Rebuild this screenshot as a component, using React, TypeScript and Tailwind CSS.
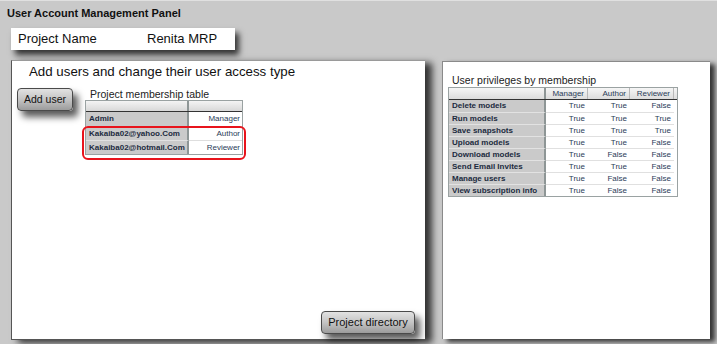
import React from 'react';

const members = [
  { email: 'Admin', role: 'Manager' },
  { email: 'Kakaiba02@yahoo.Com', role: 'Author' },
  { email: 'Kakaiba02@hotmail.Com', role: 'Reviewer' },
];

const privileges: [string, string, string, string][] = [
  ['Delete models', 'True', 'True', 'False'],
  ['Run models', 'True', 'True', 'True'],
  ['Save snapshots', 'True', 'True', 'True'],
  ['Upload models', 'True', 'True', 'False'],
  ['Download models', 'True', 'False', 'False'],
  ['Send Email Invites', 'True', 'True', 'False'],
  ['Manage users', 'True', 'False', 'False'],
  ['View subscription info', 'True', 'False', 'False'],
];

function GrayButton({ label, className = '' }: { label: string; className?: string }) {
  return (
    <button
      className={`h-[23px] rounded-[4px] border border-[#4a4a4a] bg-gradient-to-b from-[#e2e2e2] via-[#c4c4c4] to-[#9c9c9c] text-[#111] shadow-[5px_6px_7px_rgba(0,0,0,0.65)] ${className}`}
    >
      {label}
    </button>
  );
}

function MembershipTable() {
  return (
    <div className="relative">
      <div className="pl-[5px] text-[10.5px] leading-[12px] text-[#222]">Project membership table</div>
      <div className="w-[158px] border border-[#9aa2a2] bg-white">
        <div className="flex h-[11px] border-b-[1.5px] border-[#333] bg-gradient-to-b from-[#f4f4f4] to-[#d8d8d8]">
          <div className="w-[103px] border-r-2 border-[#8e9696]" />
          <div className="flex-1" />
        </div>
        {members.map((m, i) => (
          <div key={m.email} className="flex h-[14px] text-[8px] leading-[14px]">
            <div
              className={`w-[103px] border-r-2 border-[#8e9696] bg-[#cacaca] pl-[3px] font-bold text-[#1c2a40] ${
                i > 0 ? 'border-t border-t-[#e2e2e2]' : ''
              }`}
            >
              {m.email}
            </div>
            <div className={`flex-1 pr-[2px] text-right text-[#2a3c58] ${i > 0 ? 'border-t border-t-[#dedede]' : ''}`}>
              {m.role}
            </div>
          </div>
        ))}
      </div>
      <div className="pointer-events-none absolute left-[-3px] top-[38px] h-[34px] w-[164px] rounded-[6px] border-2 border-[#e8141c]" />
    </div>
  );
}

function PrivilegesTable() {
  const cols = ['Manager', 'Author', 'Reviewer'];
  const widths = ['w-[42px]', 'w-[42px]', 'w-[44px]'];
  return (
    <div className="w-[230px] border border-[#9aa2a2] bg-white">
      <div className="flex h-[12px] border-b-[1.5px] border-[#333] bg-gradient-to-b from-[#f6f6f6] to-[#dcdcdc] text-[8px] leading-[12px] text-[#2a3c58]">
        <div className="w-[97px] border-r-2 border-[#8e9696]" />
        {cols.map((c, i) => (
          <div key={c} className={`${widths[i]} border-r border-[#b8b8b8] pr-[3px] text-right`}>
            {c}
          </div>
        ))}
      </div>
      {privileges.map((row, r) => (
        <div key={row[0]} className="flex h-[12px] text-[8px] leading-[12px]">
          <div
            className={`w-[97px] border-r-2 border-[#8e9696] bg-[#cacaca] pl-[3px] font-bold text-[#1c2a40] ${
              r > 0 ? 'border-t border-t-[#e2e2e2]' : ''
            }`}
          >
            {row[0]}
          </div>
          {row.slice(1).map((v, i) => (
            <div
              key={i}
              className={`${widths[i]} pr-[3px] text-right text-[#2a3c58] ${r > 0 ? 'border-t border-t-[#e0e0e0]' : ''}`}
            >
              {v}
            </div>
          ))}
        </div>
      ))}
    </div>
  );
}

export default function App() {
  return (
    <div className="flex h-[344px] w-[717px] flex-col overflow-hidden border-t border-[#e0e0e0] bg-[#c9c9c9] font-['Liberation_Sans',Arial,sans-serif]">
      <div className="pl-[7px] pt-[6px] text-[11px] font-bold leading-[13px] text-[#111]">User Account Management Panel</div>

      <div className="ml-[11px] mt-[8px] flex h-[22px] w-[224px] items-center bg-white text-[13px] text-[#111] shadow-[4px_5px_6px_rgba(0,0,0,0.75)]">
        <span className="w-[136px] pl-[7px]">Project Name</span>
        <span>Renita MRP</span>
      </div>

      <div className="mt-[10px] flex items-start">
        <div className="ml-[11px] flex h-[280px] w-[414px] flex-col border-b border-l border-t border-[#555] border-t-[#9a9a9a] bg-white shadow-[7px_3px_7px_rgba(0,0,0,0.75)]">
          <div className="pl-[17px] pt-[3px] text-[13.3px] leading-[16px] text-[#111]">
            Add users and change their user access type
          </div>
          <div className="mt-[8px] flex items-start">
            <GrayButton label="Add user" className="ml-[5px] w-[56px] text-[10.5px]" />
            <div className="ml-[12px]">
              <MembershipTable />
            </div>
          </div>
          <div className="flex-1" />
          <div className="flex justify-end pb-[5px] pr-[10px]">
            <GrayButton label="Project directory" className="w-[94px] text-[11px]" />
          </div>
        </div>

        <div className="ml-[17px] mt-[1px] flex h-[278px] w-[268px] flex-col border-l border-t border-[#8a8a8a] bg-white shadow-[5px_3px_5px_rgba(0,0,0,0.75)]">
          <div className="pl-[9px] pt-[11px] text-[10.5px] leading-[14px] text-[#222]">User privileges by membership</div>
          <div className="ml-[5px]">
            <PrivilegesTable />
          </div>
        </div>
      </div>
    </div>
  );
}
